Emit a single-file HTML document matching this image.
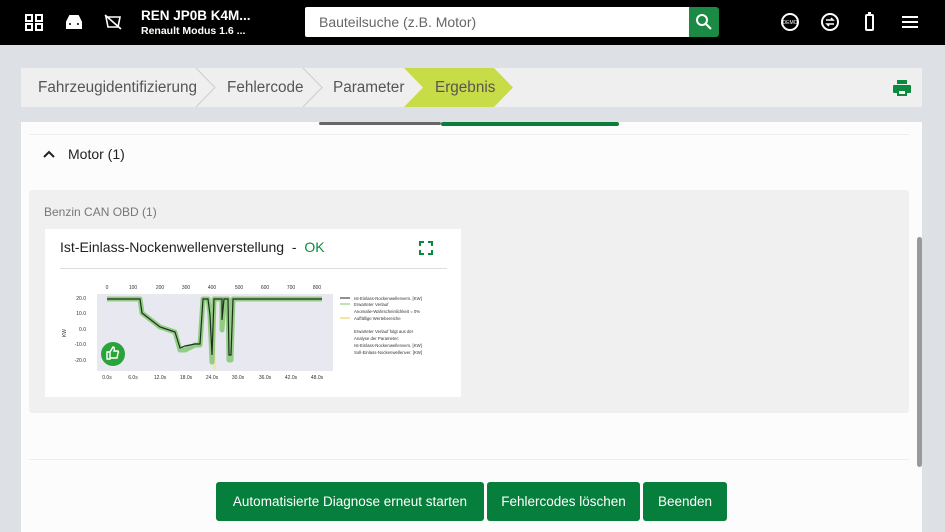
<!DOCTYPE html>
<html><head><meta charset="utf-8"><style>
*{margin:0;padding:0;box-sizing:border-box}
body{width:945px;height:532px;overflow:hidden;background:#dde0e4;font-family:"Liberation Sans",sans-serif;position:relative}
.abs{position:absolute}
.hdr{left:0;top:0;width:945px;height:45px;background:#000}
.t1{left:141px;top:8px;color:#fff;font-weight:bold;font-size:13.5px}
.t2{left:141px;top:25px;color:#fff;font-weight:bold;font-size:10.5px}
.search{left:305px;top:7px;width:385px;height:30px;background:#fff;border-radius:2px 0 0 2px;font-size:14px;color:#666;padding:7px 14px}
.sbtn{left:689px;top:7px;width:30px;height:30px;background:#1a8a45;border-radius:0 3px 3px 0}
.crumb{left:21px;top:68px;width:901px;height:39px;background:#efefef}
.cr{top:79px;font-size:15.3px;color:#555}
.panel{left:21px;top:122px;width:901px;height:410px;background:#fcfcfc}
.grey{left:29px;top:190px;width:880px;height:223px;background:#f0f0f0;border-radius:3px}
.card{left:45px;top:229px;width:416px;height:168px;background:#fff}
.btn{top:482px;height:39px;background:#077f3c;color:#fff;font-size:13.5px;text-align:center;line-height:39px;border-radius:3px}
</style></head><body>
<div class="abs hdr"></div>
<svg class="abs" style="left:0;top:0" width="140" height="45" fill="none" stroke="#fff" stroke-width="2">
<rect x="26" y="15" width="6" height="6"/><rect x="36" y="15" width="6" height="6"/><rect x="26" y="24" width="6" height="6"/><rect x="36" y="24" width="6" height="6"/>
<path d="M67 22 l3-6 h8 l3 6 v6 h-14z" fill="#fff"/><circle cx="70" cy="24" r="1" fill="#000" stroke="none"/><circle cx="78" cy="24" r="1" fill="#000" stroke="none"/>
<path d="M106 17 h14 l-2 10 h-10z M105 15 l16 14" stroke-width="1.6"/>
</svg>
<div class="abs t1">REN JP0B K4M...</div>
<div class="abs t2">Renault Modus 1.6 ...</div>
<div class="abs search">Bauteilsuche (z.B. Motor)</div>
<div class="abs sbtn"><svg width="30" height="30" fill="none" stroke="#fff" stroke-width="2"><circle cx="13" cy="13" r="5"/><path d="M17 17l5 5"/></svg></div>
<svg class="abs" style="left:775px;top:8px" width="150" height="30" fill="none" stroke="#fff" stroke-width="2">
<circle cx="15" cy="14" r="8"/><text x="15" y="16" font-size="5" fill="#fff" stroke="none" text-anchor="middle" font-family="Liberation Sans">DEMO</text>
<circle cx="55" cy="14" r="8"/><path d="M51 12h7l-2-2 M59 16h-7l2 2" stroke-width="1.5"/>
<rect x="91" y="7" width="7" height="15" rx="1"/><path d="M93 5h3"/>
<path d="M127 9h16M127 14h16M127 19h16"/>
</svg>
<div class="abs crumb"></div>
<svg class="abs" style="left:21px;top:68px" width="901" height="39">
<path d="M383 0 h90 l19 19.5 -19 19.5 h-90 l19-19.5z" fill="#c8dc48"/>
<path d="M175 0l19 19.5-19 19.5M282 0l19 19.5-19 19.5" fill="none" stroke="#ccc"/>
<g transform="translate(872,12)" fill="#0a8a3e"><rect x="4" y="0" width="10" height="4"/><rect x="0" y="5" width="18" height="8" rx="1"/><rect x="4" y="10" width="10" height="6"/><rect x="6" y="11" width="6" height="3" fill="#fff"/></g>
</svg>
<div class="abs cr" style="left:38px">Fahrzeugidentifizierung</div>
<div class="abs cr" style="left:227px">Fehlercode</div>
<div class="abs cr" style="left:333px">Parameter</div>
<div class="abs cr" style="left:435px">Ergebnis</div>
<div class="abs panel"></div>
<div class="abs" style="left:319px;top:122px;width:122px;height:3px;background:#666;border-radius:2px"></div>
<div class="abs" style="left:441px;top:122px;width:178px;height:4px;background:#0a7d3a;border-radius:2px"></div>
<div class="abs" style="left:29px;top:134px;width:880px;height:1px;background:#eee"></div>
<div class="abs" style="left:29px;top:459px;width:880px;height:1px;background:#eee"></div>
<div class="abs" style="left:917px;top:237px;width:5px;height:230px;background:#999;border-radius:3px"></div>
<svg class="abs" style="left:42px;top:148px" width="14" height="12" fill="none" stroke="#222" stroke-width="2"><path d="M2 9l5-5 5 5"/></svg>
<div class="abs" style="left:68px;top:146px;font-size:14px;color:#222">Motor (1)</div>
<div class="abs grey"></div>
<div class="abs" style="left:44px;top:205px;font-size:12px;color:#777">Benzin CAN OBD (1)</div>
<div class="abs card"></div>
<div class="abs" style="left:60px;top:239px;font-size:14px;color:#222">Ist-Einlass-Nockenwellenverstellung&nbsp; - &nbsp;<span style="color:#0a8a3e">OK</span></div>
<svg class="abs" style="left:419px;top:241px" width="14" height="14" fill="none" stroke="#0a8a3e" stroke-width="2"><path d="M1 5V1h4M9 1h4v4M13 9v4H9M5 13H1V9"/></svg>
<div class="abs" style="left:60px;top:268px;width:387px;height:1px;background:#ddd"></div>
<svg class="abs" style="left:0;top:0" width="470" height="400" font-family="Liberation Sans" font-size="5" fill="#333">
<rect x="97" y="294" width="236" height="77" fill="#e8e9f0"/>
<g text-anchor="middle"><text x="107" y="289">0</text><text x="133" y="289">100</text><text x="160" y="289">200</text><text x="186" y="289">300</text><text x="212" y="289">400</text><text x="239" y="289">500</text><text x="265" y="289">600</text><text x="291" y="289">700</text><text x="317" y="289">800</text>
<text x="107" y="379">0.0s</text><text x="133" y="379">6.0s</text><text x="160" y="379">12.0s</text><text x="186" y="379">18.0s</text><text x="212" y="379">24.0s</text><text x="238" y="379">30.0s</text><text x="265" y="379">36.0s</text><text x="291" y="379">42.0s</text><text x="317" y="379">48.0s</text></g>
<g text-anchor="end"><text x="86" y="300">20.0</text><text x="86" y="315">10.0</text><text x="86" y="331">0.0</text><text x="86" y="346">-10.0</text><text x="86" y="362">-20.0</text></g>
<text x="66" y="333" transform="rotate(-90 66 333)" text-anchor="middle">KW</text>
<rect x="213" y="296" width="3" height="74" fill="#f3e6a0"/>
<path d="M107 299 L140 299 L142 313 L160 327 L175 332 L180 350 L185 350 L195 345 L200 345 L203 299 L208 299 L210 315 L212 362 L214 299 L222 299 L222 330 L224 299 L228 299 L229 360 L231 360 L233 299 L322 299" fill="none" stroke="#7dc46a" stroke-width="5" stroke-linejoin="round" opacity=".8"/>
<path d="M107 299 L140 299 L142 313 L160 327 L175 332 L180 348 L185 346 L195 344 L200 344 L203 299 L208 299 L210 315 L212 355 L214 299 L222 299 L222 320 L224 299 L228 299 L229 355 L231 355 L233 299 L322 299" fill="none" stroke="#1f2f1f" stroke-width="1.2"/>
<circle cx="113" cy="354" r="12" fill="#2aa33a"/>
<path d="M107 352h3v7h-3zM110 352l3-5q2 0 1 4h4q1 1 0 2l-1 5h-7" fill="none" stroke="#fff" stroke-width="1.4"/>
<g font-size="4.3"><path d="M340 298h10" stroke="#222"/><text x="354" y="300">Ist-Einlass-Nockenwellenvers. [KW]</text>
<path d="M340 304h10" stroke="#7dc46a"/><text x="354" y="306">Erwarteter Verlauf</text>
<text x="354" y="313">Anomalie-Wahrscheinlichkeit =   0%</text>
<path d="M340 318h10" stroke="#f3e6a0" stroke-width="2"/><text x="354" y="320">Auffällige Wertebereiche</text>
<text x="354" y="333">Erwarteter Verlauf folgt aus der</text><text x="354" y="340">Analyse der Parameter:</text><text x="354" y="347">Ist-Einlass-Nockenwellenvers. [KW]</text><text x="354" y="354">Soll-Einlass-Nockenwellenver. [KW]</text></g>
</svg>
<div class="abs btn" style="left:216px;width:268px">Automatisierte Diagnose erneut starten</div>
<div class="abs btn" style="left:487px;width:153px">Fehlercodes löschen</div>
<div class="abs btn" style="left:643px;width:84px">Beenden</div>
</body></html>
